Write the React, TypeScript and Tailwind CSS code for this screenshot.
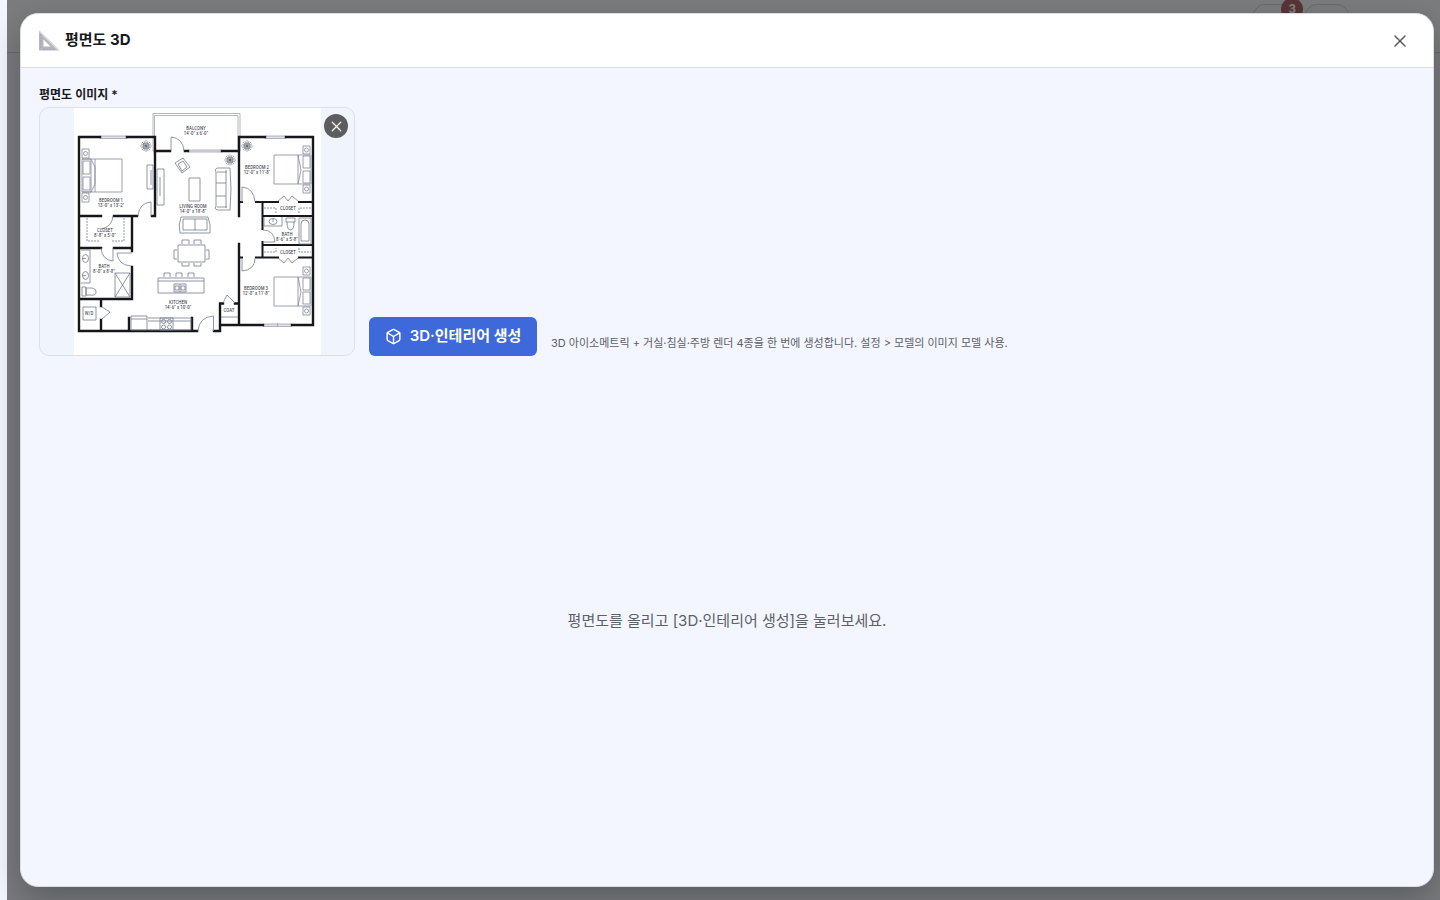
import React from 'react';
import { Box, X } from 'lucide-react';

const App = () => {
  return (
    <div className="relative flex min-h-screen flex-col bg-[#f3f6ff] pl-[7px] font-['Inter','Noto_Sans_CJK_KR',sans-serif] text-[#17181c]">
      <PageHeader />

      {/* Modal overlay */}
      <div className="absolute inset-y-0 right-0 left-[7px] flex bg-black/50 pt-[13px] pr-1.5 pb-[13px] pl-[13px]">
        <div
          role="dialog"
          aria-labelledby="dialog-title"
          className="flex flex-1 flex-col overflow-hidden rounded-[18px] border border-[#d9dde6] bg-[#f3f6ff] shadow-[0_12px_32px_rgba(0,0,0,0.25)]"
        >
          <header className="flex h-[54px] shrink-0 items-center justify-between border-b border-[#d9dde6] bg-white pr-[19px] pl-[18px]">
            <h1 id="dialog-title" className="flex items-center gap-[5px] text-[15px] font-bold">
              <RulerIcon />
              평면도 3D
            </h1>
            <button type="button" aria-label="닫기" className="flex size-7 items-center justify-center text-[#55585e]">
              <X size={20} strokeWidth={1.7} />
            </button>
          </header>

          <main className="flex flex-1 flex-col px-[18px] pt-[18px] pb-4">
            <div className="flex items-end gap-3.5">
              <div>
                <h2 className="mb-1 text-[12px] leading-[17px] font-semibold">평면도 이미지 *</h2>
                <div className="relative flex justify-center overflow-hidden rounded-[10px] border border-[#dce0ea] bg-[#f0f4fd] pr-[33px] pl-[34px]">
                  <FloorPlan />
                  <button
                    type="button"
                    aria-label="이미지 삭제"
                    className="absolute top-1.5 right-1.5 flex size-6 items-center justify-center rounded-full bg-[#5c5d5f] text-white"
                  >
                    <X size={17} strokeWidth={1.7} />
                  </button>
                </div>
              </div>
              <button
                type="button"
                className="flex h-[39px] w-[168px] items-center justify-center gap-2 rounded-md bg-[#3e69da] text-[15px] font-semibold text-white"
              >
                <Box size={17} strokeWidth={2} />
                3D·인테리어 생성
              </button>
              <p className="pb-1 text-[11px] leading-[18px] text-[#5d6066]">
                3D 아이소메트릭 + 거실·침실·주방 렌더 4종을 한 번에 생성합니다. 설정 &gt; 모델의 이미지 모델 사용.
              </p>
            </div>

            <div className="flex flex-1 items-center justify-center pt-4 text-[15px] text-[#5d6066]">
              평면도를 올리고 [3D·인테리어 생성]을 눌러보세요.
            </div>
          </main>
        </div>
      </div>
    </div>
  );
};

const PageHeader = () => (
  <div className="flex h-[53px] items-start justify-end gap-1 border-b border-[#d0d3dc] bg-[#f7f8fb] pt-1 pr-[91px]">
    <div className="relative h-8 w-12 rounded-xl border border-[#d5d5d5]">
      <span className="absolute -top-[7px] -right-[3px] flex size-[22px] items-center justify-center rounded-full bg-[#b0686c] text-[12px] font-bold text-white">
        3
      </span>
    </div>
    <div className="h-8 w-11 rounded-xl border border-[#d5d5d5]" />
  </div>
);

const RulerIcon = () => (
  <svg width="21" height="21" viewBox="0 0 21 21" aria-hidden="true">
    <path d="M0 0.5 20.5 20.5H0Z M4.500 9.500v7h7Z" fill="#b7b6bc" fillRule="evenodd" />
    <path d="M0.5 1.5 19.5 20" stroke="#dcdbe1" strokeWidth="1.5" />
    <path d="M1 5h1.5M1 8h1.5M1 11h1.5M1 14h1.5M1 17h1.5M5 20v-1.5M8 20v-1.5M11 20v-1.5M14 20v-1.5" stroke="#9b9aa1" strokeWidth="0.7" />
  </svg>
);

const ROOM_LABELS = [
  { x: 196, y: 130, name: 'BALCONY', size: "14'-0\" x 6'-0\"" },
  { x: 111, y: 202, name: 'BEDROOM 1', size: "13'-0\" x 13'-2\"" },
  { x: 257, y: 169, name: 'BEDROOM 2', size: "12'-0\" x 11'-8\"" },
  { x: 193, y: 208, name: 'LIVING ROOM', size: "14'-0\" x 18'-8\"" },
  { x: 105, y: 232, name: 'CLOSET', size: "8'-8\" x 5'-0\"" },
  { x: 104, y: 268, name: 'BATH', size: "8'-0\" x 8'-8\"" },
  { x: 287, y: 236, name: 'BATH', size: "8'-6\" x 5'-8\"" },
  { x: 256, y: 290, name: 'BEDROOM 3', size: "12'-0\" x 11'-8\"" },
  { x: 178, y: 304, name: 'KITCHEN', size: "14'-6\" x 10'-0\"" },
  { x: 288, y: 210, name: 'CLOSET' },
  { x: 288, y: 254, name: 'CLOSET' },
  { x: 229, y: 312, name: 'COAT' },
  { x: 89, y: 315, name: 'W/D' },
];

const FloorPlan = () => (
  <svg width="247" height="247" viewBox="74 108 247 247" fill="none" role="img" aria-label="평면도" className="bg-white">
    {/* Balcony and windows */}
    <g stroke="#9ea3ae" strokeWidth="0.8">
      <path d="M153 151V113.5H240V151M154.5 149V115.5H238V149" />
      <path d="M100 136h27v2.5h-27zM265 136h21v2.5h-21zM188 150h34v2h-34zM263 324h29v2.5h-29zM277.500 323v4" fill="#dfe2e8" />
    </g>

    {/* Walls */}
    <g stroke="#15171b" strokeWidth="2.4" strokeLinecap="square">
      <path d="M100 137H79V331H197M127 137H155V216H152M80 216H101M114 216H137M132 216V251M80 248H101M114 248H132M132 267V299H80M101 299V306M101 320V331M129 318V331M192 318V331" />
      <path d="M155 151H170M185 151H188M222 151H239M265 137H239V216M286 137H313V325H292M263 325H220M239 244V325M220 331V303.500H223M235 303.500H239M214 331H220" />
      <path d="M239 202H242M256 202H278M299 202H313M262.500 202V229M262.500 242V257M263 216H313M263 245H313M239 257.500H242M256 257.500H278M299 257.500H313" strokeWidth="2" />
    </g>

    {/* Doors */}
    <g stroke="#777e8d" strokeWidth="0.8">
      <path d="M171 151V137Q183 138 184 151M151 216V202Q139 203 138 216M113 216Q112 227 101 229M113 248V261Q102 260 101 248M132 253H117Q118 265 131 266M242 202V187Q254 188 255 202M263 230Q274 230 275 242H263M242 258V271Q255 270 255 258M213.500 331V316Q199 317 198 331" />
      <path d="M278 201l6-5 4 5 4-5 6 5M278 258l6 5 4-5 4 5 6-5M102 307l8 5-8 7M223 303l4-8 8 8" />
    </g>

    {/* Beds */}
    <g stroke="#81899a" strokeWidth="0.8">
      <path d="M82 159h40v33H82zM82 159h9v33h-9M91 159l4 8v17l-4 8M95 159v33M83 161h7v13h-7zM83 177h7v13h-7z" />
      <path d="M274 155h37v29h-37zM298 155l3 15-3 14M298 155v29M303 156h7v12h-7zM303 171h7v12h-7z" />
      <path d="M274 277h37v29h-37zM298 277l3 15-3 14M298 277v29M303 278h7v12h-7zM303 292h7v12h-7z" />
      <path d="M82 149h7v9h-7zM82 193h7v9h-7zM303 146h7v8h-7zM303 185h7v8h-7zM303 267h7v8h-7zM303 307h7v8h-7z" />
      <circle cx="85.500" cy="153.500" r="2" />
      <circle cx="85.500" cy="197.500" r="2" />
      <circle cx="306.500" cy="150" r="2" />
      <circle cx="306.500" cy="189" r="2" />
      <circle cx="306.500" cy="271" r="2" />
      <circle cx="306.500" cy="311" r="2" />
    </g>

    {/* Living and dining furniture */}
    <g stroke="#737b8b" strokeWidth="0.8">
      <path d="M147 165h6v24h-6zM151 170v15M157 169h7v36h-7zM160 177v19" />
      <path d="M189 178h11v23h-11z" />
      <path d="M175 163l8-5 7 9-8 6zM178 164l5-3 4 6-5 4z" />
      <path d="M217 168h13q2 21 0 42h-13q-3-1-1-4v-34q-2-3 1-4zM226 170v38M216 183h10M216 196h10M217 172h10M217 207h10" />
      <path d="M181 217h27q3 8 2 16h-30q-2-8 1-16zM183 219h24v11h-24zM195 219v11" />
      <path d="M178 245h27v17h-27zM177 250h-3v9h3M206 250h3v9h-3M182 244v-4h7v4M194 244v-4h7v4M182 263v3h7v-3M194 263v3h7v-3" />
      <path d="M158 278h46v15h-46zM158 281h46M164 277v-4h6v4M176 277v-4h6v4M188 277v-4h6v4M174 284h12v8h-12zM180 284v8M175 286h4v4h-4zM181 286h4v4h-4z" />
      <path d="M131 316h16v14h-16zM131 319h16M148 318h43v12h-43M148 321h43M160 318h13v12h-13z" />
      <circle cx="163.500" cy="321.500" r="2" />
      <circle cx="169.500" cy="321.500" r="2" />
      <circle cx="163.500" cy="327" r="2" />
      <circle cx="169.500" cy="327" r="2" />
    </g>

    {/* Bath and utility fixtures */}
    <g stroke="#747b89" strokeWidth="0.8">
      <path d="M81 250h9v33h-9M115 273h15v24h-15zM115 273l15 24M130 273l-15 24" />
      <ellipse cx="85.500" cy="258.500" rx="3" ry="4" />
      <ellipse cx="85.500" cy="275.500" rx="3" ry="4" />
      <path d="M82 258.500h4M82 275.500h4M82 287h4v9h-4zM86 288h5q5 0 5 4t-5 3h-5z" />
      <path d="M83 307h13v13H83zM221 317h17" />
      <path d="M264 217v9h18v-9M286 218h9v4h-9zM287 222q0 8 3.500 8t3.500-8M299 218h12v26h-12zM301 224q0-4 4-4t4 4v17h-8z" />
      <ellipse cx="273" cy="221.500" rx="4" ry="3" />
      <path d="M273 219v3" />
      <path d="M87 218v23h12M112 241h12v-23M264 208h12v5M299 213v-5h12M264 252h12v-4M299 248v4h12" strokeDasharray="2 1" />
    </g>

    <Plant x={146} y={146} />
    <Plant x={247} y={146} />
    <Plant x={230} y={160} />

    {/* Room names */}
    <g fill="#30343e" fontSize="5" fontWeight="400" textAnchor="middle" fontFamily="'Liberation Sans Narrow', 'Roboto Condensed', 'Roboto', sans-serif">
      {ROOM_LABELS.map((room) => (
        <text key={`${room.name}-${room.y}`} x={room.x} y={room.y}>
          {room.name}
          {room.size && (
            <tspan x={room.x} dy="5">
              {room.size}
            </tspan>
          )}
        </text>
      ))}
    </g>
  </svg>
);

const Plant = ({ x, y }: { x: number; y: number }) => (
  <g transform={`translate(${x} ${y})`} stroke="#5a606c" strokeWidth="0.5">
    <path d="M-6 0 6 0M0-6 0 6M-4-4 4 4M4-4-4 4M-5-2 5 2M-2-5 2 5M2-5-2 5M-5 2 5-2" />
    <circle r="3" />
  </g>
);

export default App;
